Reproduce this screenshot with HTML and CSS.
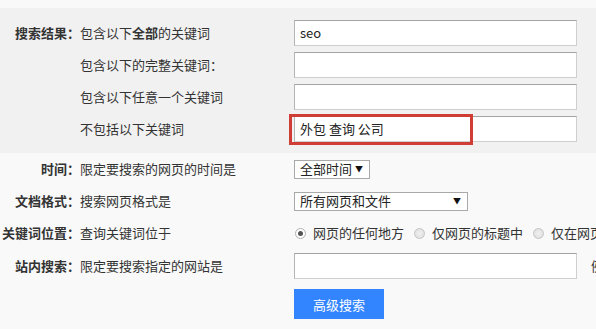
FILE: index.html
```html
<!DOCTYPE html>
<html lang="zh-CN">
<head>
<meta charset="utf-8">
<title>高级搜索</title>
<link rel="stylesheet" href="styles.css">
</head>
<body>
<div class="page">
  <section class="group">
    <div class="row">
      <div class="label">搜索结果：</div>
      <div class="desc">包含以下<b>全部</b>的关键词</div>
      <div class="field"><div class="input">seo</div></div>
    </div>
    <div class="row">
      <div class="label"></div>
      <div class="desc">包含以下的完整关键词：</div>
      <div class="field"><div class="input"></div></div>
    </div>
    <div class="row">
      <div class="label"></div>
      <div class="desc">包含以下任意一个关键词</div>
      <div class="field"><div class="input"></div></div>
    </div>
    <div class="row">
      <div class="label"></div>
      <div class="desc">不包括以下关键词</div>
      <div class="field mark-wrap"><div class="input">外包 查询 公司</div><span class="mark"></span></div>
    </div>
  </section>

  <section class="lower">
    <div class="row row-32">
      <div class="label">时间：</div>
      <div class="desc">限定要搜索的网页的时间是</div>
      <div class="field"><div class="select sel-time"><span>全部时间</span><span class="arrow">▼</span></div></div>
    </div>
    <div class="row row-32">
      <div class="label">文档格式：</div>
      <div class="desc">搜索网页格式是</div>
      <div class="field"><div class="select sel-format"><span>所有网页和文件</span><span class="arrow">▼</span></div></div>
    </div>
    <div class="row row-32">
      <div class="label">关键词位置：</div>
      <div class="desc">查询关键词位于</div>
      <div class="field radios">
        <span class="radio checked"></span><span class="opt">网页的任何地方</span>
        <span class="radio"></span><span class="opt">仅网页的标题中</span>
        <span class="radio"></span><span class="opt">仅在网页的URL中</span>
      </div>
    </div>
    <div class="row row-34">
      <div class="label">站内搜索：</div>
      <div class="desc">限定要搜索指定的网站是</div>
      <div class="field site"><div class="input"></div><span class="hint">例如：baidu.com</span></div>
    </div>
    <div class="row row-btn">
      <div class="label"></div>
      <div class="desc"></div>
      <div class="field"><button class="btn">高级搜索</button></div>
    </div>
  </section>
</div>
</body>
</html>
```

FILE: styles.css
```css
html, body {
  margin: 0;
  padding: 0;
}
body {
  width: 596px;
  height: 329px;
  overflow: hidden;
  background: #f9f9f9;
  font-family: "Noto Sans CJK SC", "Microsoft YaHei", sans-serif;
  font-size: 13px;
  color: #333;
}
.page {
  padding-top: 8px;
}
.group {
  background: #f1f1f1;
  padding: 12px 0 11px;
  display: flex;
  flex-direction: column;
  gap: 6px;
}
.row {
  display: grid;
  grid-template-columns: 80px 214px 1fr;
  align-items: center;
  height: 26px;
  white-space: nowrap;
}
.row-32 { height: 32px; }
.row-34 { height: 34px; }
.row-btn { height: 30px; margin-top: 6px; }
.label {
  text-align: right;
  font-weight: bold;
  color: #333;
  line-height: 16px;
}
.desc {
  line-height: 16px;
  color: #333;
}
.desc b { font-weight: bold; }
.field {
  display: flex;
  align-items: center;
  line-height: 16px;
}
.input {
  box-sizing: border-box;
  width: 283px;
  height: 26px;
  background: #fff;
  border: 1px solid #cfcfcf;
  border-top-color: #a3a3a3;
  border-left-color: #b5b5b5;
  padding: 0 5px;
  line-height: 24px;
  font-size: 13px;
  color: #222;
}
.mark-wrap {
  position: relative;
}
.mark {
  position: absolute;
  left: -5px;
  top: -2px;
  width: 184px;
  height: 31px;
  box-sizing: border-box;
  border: 3px solid #cf3d35;
}
.select {
  box-sizing: border-box;
  height: 19px;
  background: #fff;
  border: 1px solid #a9a9a9;
  display: flex;
  align-items: center;
  justify-content: space-between;
  padding: 0 6px 0 5px;
  color: #222;
  line-height: 16px;
}
.sel-time { width: 76px; }
.sel-format { width: 174px; }
.arrow {
  font-size: 8px;
  color: #111;
  line-height: 8px;
}
.radios {
  display: flex;
  align-items: center;
}
.radio {
  box-sizing: border-box;
  width: 11px;
  height: 11px;
  border-radius: 50%;
  border: 1px solid #c4c4c4;
  background: radial-gradient(circle, #f0f0f0 0, #dcdcdc 100%);
  margin-right: 7px;
  flex: none;
  position: relative;
}
.radio:first-child { margin-left: 1px; }
.radio.checked {
  background: #fff;
  border-color: #b0b0b0;
}
.radio.checked::after {
  content: "";
  position: absolute;
  left: 2px;
  top: 2px;
  width: 5px;
  height: 5px;
  border-radius: 50%;
  background: #555;
}
.opt {
  margin-right: 10px;
  color: #333;
}
.site .hint {
  margin-left: 14px;
  color: #333;
}
.btn {
  width: 90px;
  height: 30px;
  border: 0;
  background: #3385ff;
  color: #fff;
  font-family: inherit;
  font-size: 13px;
  padding: 0;
  cursor: pointer;
}
```
